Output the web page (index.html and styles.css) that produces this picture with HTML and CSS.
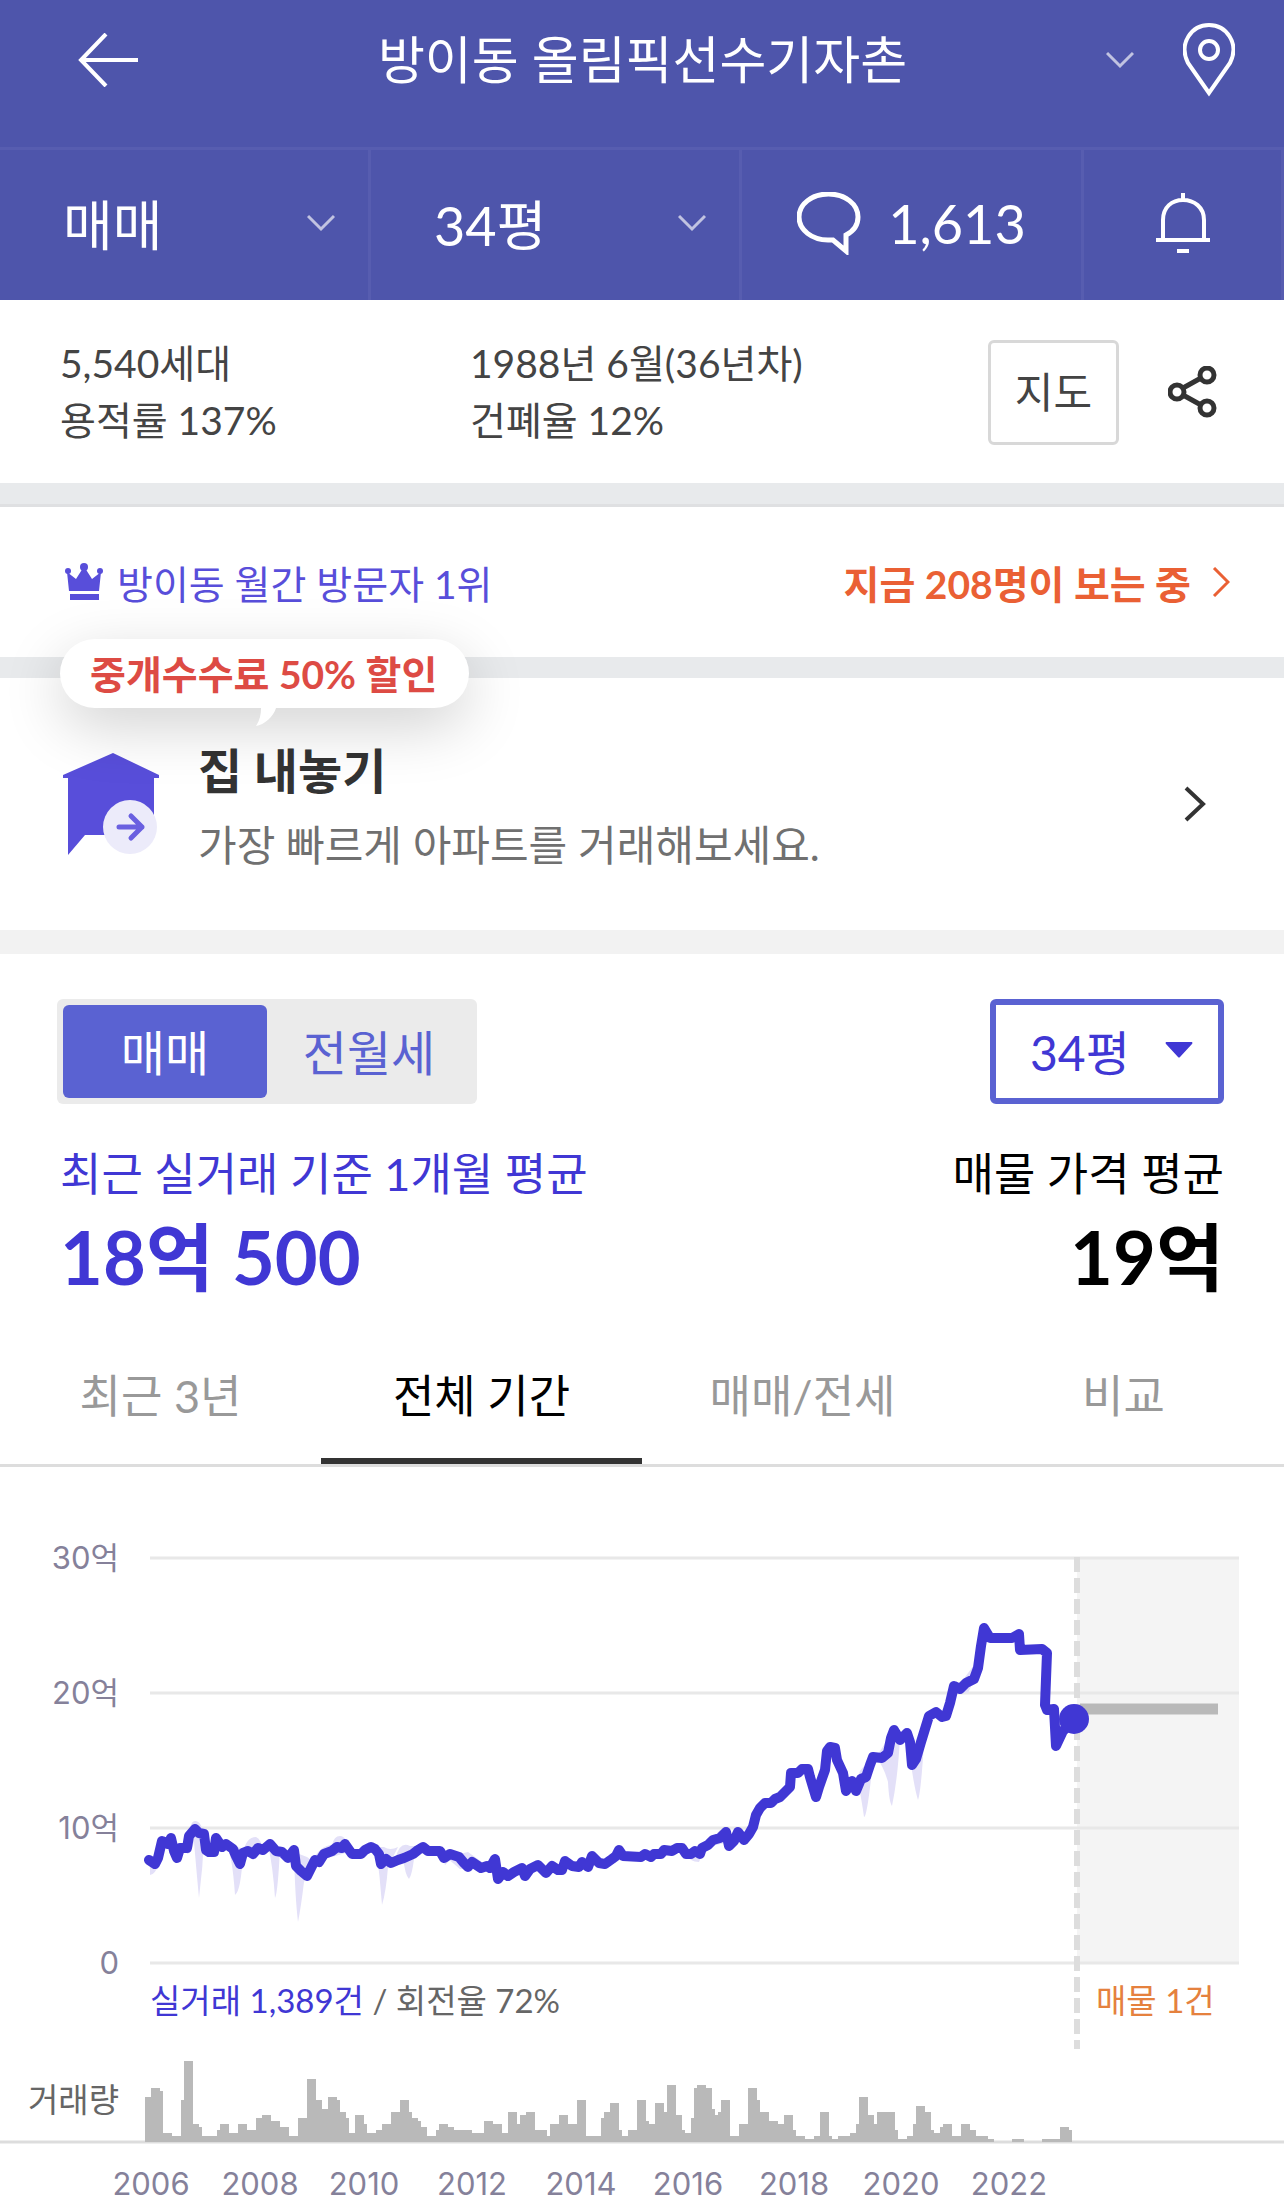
FILE: index.html
```html
<!DOCTYPE html>
<html lang="ko">
<head>
    <meta charset="UTF-8">
    <meta name="viewport" content="width=device-width, initial-scale=1.0">
    <title>방이동 올림픽선수기자촌</title>
    <link rel="stylesheet" href="styles.css">
</head>
<body>

    <header class="header">
        <div class="title-row">
            <a href="#" class="back" aria-label="뒤로">
                <svg width="60" height="54" viewBox="0 0 60 54" fill="none" stroke="#fff" stroke-width="4"><path d="M28 1L3 27L28 53M3 27H60"/></svg>
            </a>
            <h1>방이동 올림픽선수기자촌</h1>
            <div class="title-icons">
                <button type="button" aria-label="단지 선택">
                    <svg width="28" height="18" viewBox="0 0 28 18" class="chevron"><path d="M1 2L14 15L27 2"/></svg>
                </button>
                <button type="button" aria-label="위치">
                    <svg width="52" height="74" viewBox="0 0 52 74" fill="none" stroke="#fff" stroke-width="4"><path d="M26 70L5 40C-5 20 9 2 26 2S57 20 47 40Z"/><circle cx="26" cy="27" r="9"/></svg>
                </button>
            </div>
        </div>
        <div class="filter-row">
            <label class="cell cell-select">
                <select aria-label="거래 종류"><option>매매</option><option>전월세</option></select>
                <svg width="28" height="18" viewBox="0 0 28 18" class="chevron"><path d="M1 2L14 15L27 2"/></svg>
            </label>
            <label class="cell cell-select">
                <select aria-label="평형"><option>34평</option></select>
                <svg width="28" height="18" viewBox="0 0 28 18" class="chevron"><path d="M1 2L14 15L27 2"/></svg>
            </label>
            <a href="#" class="cell cell-center">
                <svg width="64" height="63" viewBox="0 0 64 63" fill="none" stroke="#fff" stroke-width="5"><path d="M49 43C57 39 61 32 61 25C61 12 48 2 31.500 2S2 12 2 25S15 48 31 48H36L49 59Z"/></svg>
                1,613
            </a>
            <button type="button" class="cell cell-center" aria-label="알림">
                <svg width="54" height="60" viewBox="0 0 54 60" fill="none" stroke="#fff" stroke-width="4"><path d="M7 46V27C7 14 16 7 27 7S48 14 48 27V46M0 47H54M27 0V7M21 58H33"/></svg>
            </button>
        </div>
    </header>

    <section class="info">
        <p>5,540세대<br>용적률 137%</p>
        <p>1988년 6월(36년차)<br>건폐율 12%</p>
        <button type="button" class="map-btn">지도</button>
        <button type="button" aria-label="공유">
            <svg width="50" height="52" viewBox="0 0 50 52" fill="none" stroke="#333" stroke-width="5"><circle cx="9" cy="26" r="7"/><circle cx="39" cy="9" r="7"/><circle cx="39" cy="42" r="7"/><path d="M15 22L33 12M15 29L33 39"/></svg>
        </button>
    </section>

    <section class="rank">
        <svg width="38" height="38" viewBox="0 0 38 38" fill="#584eda"><circle cx="3" cy="8" r="3"/><circle cx="19" cy="4" r="4"/><circle cx="35" cy="8" r="3"/><path d="M2 9L11 16L18 5H20L27 16L36 9L34 28H4ZM5 31H34V37H5Z"/></svg>
        <p>방이동 월간 방문자 1위</p>
        <a href="#">지금 208명이 보는 중
            <svg width="18" height="30" viewBox="0 0 18 30" fill="none" stroke="#ea6034" stroke-width="3"><path d="M2 1L16 15L2 29"/></svg>
        </a>
    </section>

    <section class="sell">
        <div class="badge">중개수수료 50% 할인
            <svg class="tail" width="20" height="18" viewBox="0 0 20 18" fill="#fff"><path d="M5 0H20C18 8 8 17 0 18C4 12 5 6 5 0Z"/></svg>
        </div>
        <svg width="96" height="102" viewBox="0 0 96 102"><path fill="#584eda" d="M50 0L96 22V25H91V82H22L5 102V25H0V22Z"/><circle cx="67" cy="74" r="27" fill="#ecebfa"/><path d="M56 74H79M68 63L79 74L68 85" fill="none" stroke="#6a60e0" stroke-width="5" stroke-linecap="round" stroke-linejoin="round"/></svg>
        <div class="sell-text">
            <h2>집 내놓기</h2>
            <p>가장 빠르게 아파트를 거래해보세요.</p>
        </div>
        <a href="#" aria-label="집 내놓기">
            <svg width="22" height="36" viewBox="0 0 22 36" fill="none" stroke="#333" stroke-width="4"><path d="M2 2L19 18L2 34"/></svg>
        </a>
    </section>

    <section class="price">
        <div class="price-row">
            <div class="toggle">
                <button type="button" class="on">매매</button>
                <button type="button">전월세</button>
            </div>
            <label class="size-select">
                <select aria-label="평형 선택"><option>34평</option></select>
                <svg width="28" height="16" viewBox="0 0 28 16" fill="#4037d4"><path d="M1 0H27Q28 1 27 2L15 15Q14 16 13 15L1 2Q0 1 1 0Z"/></svg>
            </label>
        </div>
        <div class="price-row averages">
            <div class="deal">
                <p>최근 실거래 기준 1개월 평균</p>
                <strong>18억 500</strong>
            </div>
            <div class="ask">
                <p>매물 가격 평균</p>
                <strong>19억</strong>
            </div>
        </div>
    </section>

    <nav class="tabs">
        <a href="#">최근 3년</a>
        <a href="#" class="on">전체 기간</a>
        <a href="#">매매/전세</a>
        <a href="#">비교</a>
    </nav>

    <svg class="chart" viewBox="0 0 1284 736" role="img" aria-label="실거래가 추이">
        <!-- listing area -->
        <rect x="1077" y="91" width="162" height="405" fill="#f4f4f4"/>
        <path d="M150 91H1239M150 226H1239M150 361H1239M150 496H1239" stroke="#e8e8e8" stroke-width="3"/>
        <path d="M1077 90V582" stroke="#ddd" stroke-width="6" stroke-dasharray="15 6"/>

        <g class="axis" text-anchor="end">
            <text x="119" y="102">30억</text>
            <text x="119" y="237">20억</text>
            <text x="119" y="372">10억</text>
            <text x="119" y="507">0</text>
        </g>

        <!-- low/high range -->
        <g fill="#e3e0f8">
            <path d="M150 390V408Q155 408 160 395Z"/>
            <path d="M187 387Q188 354 195 354Q202 354 204 370Q203 400 199 431Q197 410 194 375Q191 387 187 387Z"/>
            <path d="M226 378Q232 385 235 428Q241 424 243 386Q246 370 256 370Q262 372 262 385Z"/>
            <path d="M268 378Q273 400 275 431Q278 425 280 380Z"/>
            <path d="M294 385Q295 430 298 455Q301 440 304 415L314 395L307 390Z"/>
            <path d="M311 396Q320 378 332 378Q334 369 340 369Q347 369 349 385Z"/>
            <path d="M376 380Q380 410 382 438Q386 425 388 400L398 380Q390 384 384 380Z"/>
            <path d="M396 390Q400 374 410 379H425L414 392Q412 408 409 412Q405 408 403 390Z"/>
            <path d="M440 385L445 398L455 388L468 385L482 395V402H460Z"/>
            <path d="M683 385Q690 395 699 395L706 378L720 363H730V375Z"/>
            <path d="M858 315Q862 335 864 350Q867 350 872 303L866 298Q858 302 858 315Z"/>
            <path d="M876 290L888 272L900 270Q898 310 892 339Q889 335 888 315Q884 300 876 290Z"/>
            <path d="M910 290Q914 320 918 333Q921 325 924 275Z"/>
            <path d="M954 225L968 226L980 200L974 198Z"/>
        </g>

        <path class="price-line" d="M149 393L155 397L158 391L162 374L168 377L171 371L174 384L177 391L180 381H187L189 369L195 362L199 366L204 367L206 383L209 385H214L216 371L222 380L226 377L233 382L236 389L240 397L243 386L248 384L253 387L258 381L263 383L270 377L276 384L282 385L288 391L294 383L296 399L301 404L307 409L311 401L315 393L319 395L324 387L332 384L337 380L342 381L345 377L352 387H361L365 383L371 380L375 382L379 387L381 397L386 392L391 396L398 393L404 391L413 387L418 383L423 380L428 384H440L444 391L450 387L459 390L464 396L468 400L472 395L481 401L487 399L490 401L495 392L498 412L503 405L508 409L514 405L522 401L525 409L530 402L538 398L546 406L552 399L558 403H562L565 394L572 399L579 400L582 395L588 400L592 389L599 396L605 397L612 392L616 389L619 383L623 389L641 390L645 387L651 390L654 387H661L664 383L672 384L677 381H682L686 387H691L695 384L700 387L702 381L708 378L713 373L720 371L726 365L729 379L734 374L738 365L744 373L749 367L753 360L756 348L760 341L765 336H771L775 332L780 330L785 325L790 320L791 306H798L802 302H808L810 310L816 330L819 320L825 303L827 284L830 280L835 281L837 293L843 306L846 324L852 314L856 324L861 312L866 310L870 298L873 290L882 291L888 286L891 271L894 263L900 273L907 266L910 275L912 298L916 292L921 275L929 249L936 245L942 250L946 249L950 236L954 219L960 222L966 216L974 212L978 201L981 179L984 161L990 171H1012L1019 167L1020 183L1042 182L1047 186L1045 238L1047 243L1054 242L1056 279L1063 264L1074 252"/>
        <path d="M1080 242H1218" stroke="#b9b9b9" stroke-width="11"/>
        <circle cx="1074" cy="252" r="15" fill="#4037d4"/>

        <g class="note">
            <text x="150" y="546"><tspan fill="#4037d4">실거래 1,389건</tspan> / 회전율 72%</text>
            <text x="1096" y="546" fill="#e5813e">매물 1건</text>
            <text x="119" y="645" text-anchor="end">거래량</text>
        </g>

        <!-- monthly volume, one unit is 3px -->
        <path d="M0 675H1284" stroke="#ddd" stroke-width="3"/>
        <path fill="#b9b9b9" transform="translate(145 675) scale(3)" d="M0 0V-15H2V-18H5V-17H6V-3H9V-2H12V-14H13V-27H16V-6H18V-5H19V-2H24V-4H25V-6H28V-3H31V-6H34V-4H37V-8H39V-9H42V-7H45V-5H48V-2H51V-8H54V-21H57V-14H59V-11H61V-15H64V-14H65V-10H67V-8H68V-3H70V-9H73V-6H74V-3H77V-4H79V-6H82V-10H85V-14H88V-10H89V-8H91V-7H92V-5H94V-2H97V-4H98V-6H101V-5H103V-4H109V-3H113V-7H116V-6H119V-3H121V-10H124V-6H125V-9H127V-10H130V-4H134V-2H135V-6H138V-9H141V-6H144V-14H147V-2H152V-8H153V-10H155V-13H158V-4H159V-2H161V-4H164V-14H167V-7H168V-6H170V-13H173V-10H174V-19H177V-9H179V-4H180V-3H182V-8H183V-18H184V-19H187V-18H189V-11H190V-9H191V-10H192V-14H195V-2H198V-6H201V-18H204V-14H205V-10H208V-7H211V-6H213V-9H216V-4H217V-2H220V-1H223V-2H225V-10H228V-2H229V-1H231V-2H235V-3H237V-6H238V-15H241V-9H243V-6H244V-10H250V-4H251V-1H254V-2H256V-6H257V-12H260V-10H262V-4H263V-3H265V-5H266V-6H269V-2H272V-6H275V-4H277V-2H281V-1H283V0H289V-1H293V0H299V-1H305V-5H308V-4H309V0Z"/>

        <g class="axis" text-anchor="middle">
            <text x="151" y="728">2006</text>
            <text x="260" y="728">2008</text>
            <text x="364" y="728">2010</text>
            <text x="472" y="728">2012</text>
            <text x="581" y="728">2014</text>
            <text x="688" y="728">2016</text>
            <text x="794" y="728">2018</text>
            <text x="901" y="728">2020</text>
            <text x="1009" y="728">2022</text>
        </g>
    </svg>

</body>
</html>
```
FILE: styles.css
```css
* {box-sizing: border-box;}

body {margin: 0; background: #fff; color: #444; font-family: Lato, "Noto Sans CJK KR", sans-serif; font-size: 39px;}

h1, h2, p {margin: 0; font-weight: 400;}

a {color: inherit; text-decoration: none;}

svg {display: block; flex: none;}

button, select {font: inherit; color: inherit; background: none; border: 0; padding: 0; margin: 0; cursor: pointer;}

select {appearance: none; outline: 0;}

.header {background: #4e55ab; color: #fff;}

.chevron {fill: none; stroke: #fff; stroke-width: 3; opacity: 0.65;}

.title-row {display: grid; grid-template-columns: 1fr auto 1fr; align-items: center; height: 150px; padding: 0 49px 27px 78px; border-bottom: 3px solid #575db0;}

.title-row h1 {font-size: 51px; line-height: 60px; margin-right: 28px;}

.title-icons {display: flex; align-items: center; justify-content: flex-end; gap: 49px;}

.filter-row {display: grid; grid-template-columns: 371fr 371fr 342fr 200fr; height: 150px; font-size: 54px;}

.cell {display: flex; align-items: center; padding-bottom: 4px; border-right: 3px solid #575db0;}

.cell-select {padding: 0 33px 4px 63px;}

.cell-select select {flex: 1; min-width: 0; padding-top: 6px; line-height: 72px;}

.cell-center {justify-content: center; gap: 27px;}

.info {display: grid; grid-template-columns: 410px 1fr auto auto; align-items: center; padding: 35px 66px 34px 60px; line-height: 57px;}

.map-btn {width: 131px; height: 105px; margin-right: 49px; border: 3px solid #d8d8d8; border-radius: 6px; font-size: 42px;}

.rank {display: flex; align-items: center; gap: 14px; height: 174px; padding: 3px 54px 0 65px; border-top: 21px solid #e8eaec; color: #584eda; box-shadow: inset 0 3px #dfe0e2;}

.rank p {flex: 1;}

.rank a {display: flex; align-items: center; gap: 21px; color: #ea6034; font-weight: 700;}

.sell {position: relative; display: flex; align-items: center; height: 273px; padding: 0 78px 0 63px; border-top: 21px solid #e8eaec;}

.badge {position: absolute; top: -39px; left: 60px; padding: 2px 32px 0 30px; border-radius: 35px; background: #fff; box-shadow: 0 18px 60px rgba(0, 0, 0, 0.18); color: #dd4b44; font-weight: 700; line-height: 67px;}

.tail {position: absolute; top: 100%; left: 196px;}

.sell-text {flex: 1; margin-left: 39px; padding-top: 4px;}

.sell h2 {color: #333; font-size: 48px; font-weight: 700; line-height: 66px;}

.sell p {margin-top: 11px; color: #707070; font-size: 42px; line-height: 60px;}

.price {padding: 45px 60px 27px 57px; border-top: 24px solid #f2f2f2;}

.price-row {display: flex; justify-content: space-between;}

.toggle {display: flex; padding: 6px; border-radius: 6px; background: #ebebeb; color: #5a62d2; font-size: 48px;}

.toggle button {width: 204px; height: 93px; padding-bottom: 3px; border-radius: 6px;}

.toggle .on {background: #5a62d2; color: #fff;}

.size-select {display: flex; align-items: center; width: 234px; height: 105px; padding: 0 25px 3px 34px; border: 6px solid #5a62d2; border-radius: 6px; color: #4037d4; font-size: 48px;}

.size-select select {flex: 1; min-width: 0; padding-top: 6px; line-height: 72px;}

.averages {margin: 40px 0 0 3px; font-size: 45px; line-height: 60px;}

.averages strong {display: block; margin-top: 8px; font-size: 74px; line-height: 90px;}

.deal {color: #4037d4;}

.ask {color: #000; text-align: right;}

.tabs {display: flex; border-bottom: 3px solid #ddd; color: #999; font-size: 45px;}

.tabs a {flex: 1; height: 135px; border-bottom: 6px solid transparent; line-height: 135px; text-align: center;}

.tabs .on {border-color: #333; color: #000;}

.chart {width: 100%; height: auto;}

.axis {fill: #85819a; font-family: Inter, "Noto Sans CJK KR", sans-serif; font-size: 31px; font-weight: 400;}

.note {fill: #666; font-size: 33px;}

.price-line {fill: none; stroke: #4037d4; stroke-width: 10; stroke-linecap: round; stroke-linejoin: round;}
```
